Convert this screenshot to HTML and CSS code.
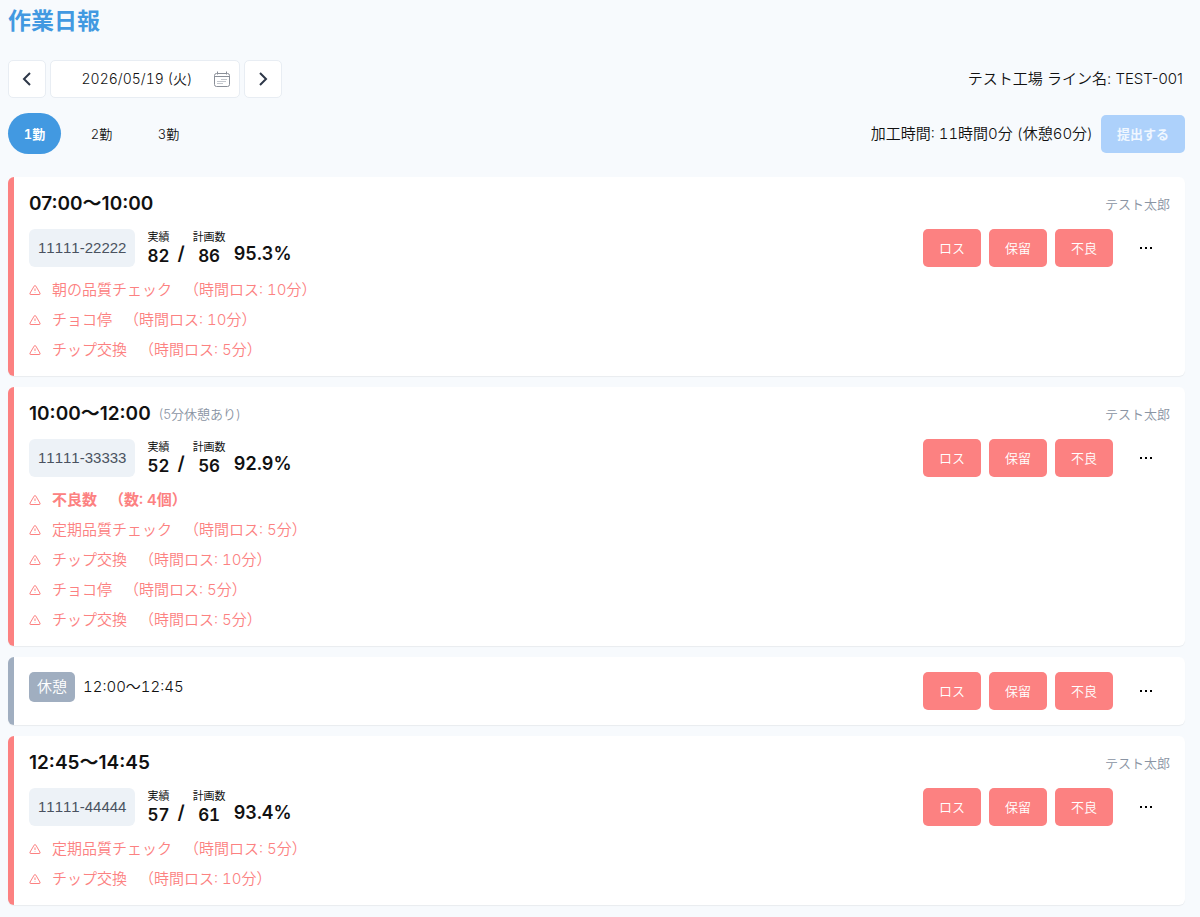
FILE: index.html
```html
<!DOCTYPE html>
<html lang="ja">
<head>
    <meta charset="UTF-8">
    <meta name="viewport" content="width=device-width, initial-scale=1.0">
    <title>作業日報</title>
    <link rel="stylesheet" href="styles.css">
</head>
<body>
    <!-- 共通アイコン -->
    <svg class="sprite" aria-hidden="true">
        <symbol id="warn" viewBox="0 0 24 24">
            <path d="M10.3 4.2 2.2 18a2 2 0 0 0 1.7 3h16.2a2 2 0 0 0 1.7-3L13.7 4.2a2 2 0 0 0-3.4 0z"/>
            <path d="M12 9v5M12 17v1"/>
        </symbol>
    </svg>

    <header>
        <h1>作業日報</h1>
        <div class="bar">
            <div class="date-nav">
                <button type="button" class="nav-btn" aria-label="前の日">
                    <svg width="16" height="16" viewBox="0 0 16 16"><path d="M11 2 5 8l6 6"/></svg>
                </button>
                <div class="date-box">
                    <input type="text" id="date" aria-label="日付" value="2026/05/19 (火)">
                    <svg width="16" height="16" viewBox="0 0 16 16">
                        <rect x="0.5" y="2.5" width="15" height="13" rx="2"/>
                        <path d="M3.5 0.5v3M12.5 0.5v3M0.5 5.5h15"/>
                        <path class="lines" d="M7 8.5h6M3 10.5h9M3 12.5h6"/>
                    </svg>
                </div>
                <button type="button" class="nav-btn" aria-label="次の日">
                    <svg width="16" height="16" viewBox="0 0 16 16"><path d="M5 2l6 6-6 6"/></svg>
                </button>
            </div>
            <p class="line-name">テスト工場 ライン名: TEST-001</p>
        </div>
        <div class="bar">
            <div class="shifts">
                <button type="button" class="shift active">1勤</button>
                <button type="button" class="shift">2勤</button>
                <button type="button" class="shift">3勤</button>
            </div>
            <div class="submit">
                <p>加工時間: 11時間0分 (休憩60分)</p>
                <button type="button" class="btn-submit" disabled>提出する</button>
            </div>
        </div>
    </header>

    <main>
        <section class="card">
            <div class="card-head">
                <h2>07:00〜10:00</h2>
                <span class="worker">テスト太郎</span>
            </div>
            <div class="card-row">
                <span class="code">11111-22222</span>
                <div class="result">
                    <div class="count"><span>実績</span><b>82</b></div>
                    <b class="slash">/</b>
                    <div class="count"><span>計画数</span><b>86</b></div>
                    <b class="rate">95.3%</b>
                </div>
                <div class="actions">
                    <button type="button" class="btn">ロス</button>
                    <button type="button" class="btn">保留</button>
                    <button type="button" class="btn">不良</button>
                    <button type="button" class="more" aria-label="メニュー"><i></i><i></i><i></i></button>
                </div>
            </div>
            <ul class="losses">
                <li><svg><use href="#warn"/></svg><span>朝の品質チェック</span><span>（時間ロス: 10分）</span></li>
                <li><svg><use href="#warn"/></svg><span>チョコ停</span><span>（時間ロス: 10分）</span></li>
                <li><svg><use href="#warn"/></svg><span>チップ交換</span><span>（時間ロス: 5分）</span></li>
            </ul>
        </section>

        <section class="card">
            <div class="card-head">
                <h2>10:00〜12:00</h2>
                <span class="note">(5分休憩あり)</span>
                <span class="worker">テスト太郎</span>
            </div>
            <div class="card-row">
                <span class="code">11111-33333</span>
                <div class="result">
                    <div class="count"><span>実績</span><b>52</b></div>
                    <b class="slash">/</b>
                    <div class="count"><span>計画数</span><b>56</b></div>
                    <b class="rate">92.9%</b>
                </div>
                <div class="actions">
                    <button type="button" class="btn">ロス</button>
                    <button type="button" class="btn">保留</button>
                    <button type="button" class="btn">不良</button>
                    <button type="button" class="more" aria-label="メニュー"><i></i><i></i><i></i></button>
                </div>
            </div>
            <ul class="losses">
                <li class="defect"><svg><use href="#warn"/></svg><span>不良数</span><span>（数: 4個）</span></li>
                <li><svg><use href="#warn"/></svg><span>定期品質チェック</span><span>（時間ロス: 5分）</span></li>
                <li><svg><use href="#warn"/></svg><span>チップ交換</span><span>（時間ロス: 10分）</span></li>
                <li><svg><use href="#warn"/></svg><span>チョコ停</span><span>（時間ロス: 5分）</span></li>
                <li><svg><use href="#warn"/></svg><span>チップ交換</span><span>（時間ロス: 5分）</span></li>
            </ul>
        </section>

        <section class="card rest">
            <div class="card-row">
                <span class="badge">休憩</span>
                <span class="rest-time">12:00〜12:45</span>
                <div class="actions">
                    <button type="button" class="btn">ロス</button>
                    <button type="button" class="btn">保留</button>
                    <button type="button" class="btn">不良</button>
                    <button type="button" class="more" aria-label="メニュー"><i></i><i></i><i></i></button>
                </div>
            </div>
        </section>

        <section class="card">
            <div class="card-head">
                <h2>12:45〜14:45</h2>
                <span class="worker">テスト太郎</span>
            </div>
            <div class="card-row">
                <span class="code">11111-44444</span>
                <div class="result">
                    <div class="count"><span>実績</span><b>57</b></div>
                    <b class="slash">/</b>
                    <div class="count"><span>計画数</span><b>61</b></div>
                    <b class="rate">93.4%</b>
                </div>
                <div class="actions">
                    <button type="button" class="btn">ロス</button>
                    <button type="button" class="btn">保留</button>
                    <button type="button" class="btn">不良</button>
                    <button type="button" class="more" aria-label="メニュー"><i></i><i></i><i></i></button>
                </div>
            </div>
            <ul class="losses">
                <li><svg><use href="#warn"/></svg><span>定期品質チェック</span><span>（時間ロス: 5分）</span></li>
                <li><svg><use href="#warn"/></svg><span>チップ交換</span><span>（時間ロス: 10分）</span></li>
            </ul>
        </section>
    </main>
</body>
</html>
```
FILE: styles.css
```css
* {
    box-sizing: border-box;
    margin: 0;
    padding: 0;
}

body {
    padding: 6px 15px 11px 8px;
    background: #f7fafd;
    color: #111;
    font-family: Inter, "Noto Sans CJK JP", sans-serif;
    font-size: 15px;
    font-weight: 350;
    line-height: 24px;
}

button,
input {
    font: inherit;
    color: inherit;
    border: 0;
    background: none;
}

button {
    cursor: pointer;
}

svg {
    fill: none;
    stroke: currentColor;
    flex: none;
}

.sprite {
    display: none;
}

/* ヘッダー */
h1 {
    color: #4299e1;
    font-size: 23px;
    line-height: 30px;
    font-weight: 600;
    margin-bottom: 24px;
}

.bar {
    display: flex;
    justify-content: space-between;
    align-items: center;
    margin-bottom: 15px;
}

.date-nav {
    display: flex;
    gap: 4px;
}

.nav-btn,
.date-box {
    display: flex;
    align-items: center;
    justify-content: center;
    height: 38px;
    background: #fff;
    border: 1px solid #e8edf3;
    border-radius: 5px;
}

.nav-btn {
    width: 38px;
}

.nav-btn svg {
    stroke-width: 2;
    color: #2d3748;
}

.date-box {
    width: 190px;
    padding: 0 9px;
}

.date-box input {
    flex: 1;
    min-width: 0;
    font-size: 14px;
    font-variant-numeric: tabular-nums;
    text-align: center;
}

.date-box svg {
    color: #8a8f98;
}

.date-box .lines {
    stroke: #c3c7cd;
}

.line-name {
    padding-right: 2px;
}

.submit p {
    font-variant-numeric: tabular-nums;
}

.shifts {
    display: flex;
    gap: 14px;
}

.shift {
    width: 53px;
    height: 41px;
    border-radius: 21px;
    font-size: 13px;
    font-variant-numeric: tabular-nums;
}

.shift.active {
    background: #4299e1;
    color: #fff;
    font-weight: 600;
}

.submit {
    display: flex;
    align-items: center;
    gap: 8px;
}

.btn-submit {
    height: 38px;
    padding: 0 16px;
    border-radius: 5px;
    background: #add1fb;
    color: #f0f7ff;
    font-size: 13px;
    font-weight: 600;
}

/* 時間帯カード */
main {
    display: flex;
    flex-direction: column;
    gap: 11px;
    margin-top: 23px;
}

.card {
    padding: 15px 15px 11px;
    background: #fff;
    border-left: 6px solid #fc8181;
    border-radius: 6px;
    box-shadow: 0 1px 1px rgba(0, 0, 0, 0.06);
}

.card.rest {
    border-left-color: #a0aec0;
    padding-bottom: 15px;
}

.card-head {
    display: flex;
    align-items: center;
    gap: 8px;
    height: 24px;
    margin-bottom: 13px;
}

h2 {
    font-size: 19px;
    line-height: 26px;
    font-weight: 600;
}

.note,
.worker {
    color: #8a94a3;
    font-size: 13px;
}

.worker {
    margin-left: auto;
}

.card-row {
    display: flex;
}

.code {
    height: 38px;
    padding: 0 9px;
    border-radius: 6px;
    background: #edf2f7;
    color: #4a5260;
    font-family: "Liberation Sans", sans-serif;
    font-kerning: none;
    line-height: 38px;
}

.result {
    display: flex;
    align-items: center;
    gap: 8px;
    margin-left: 12px;
}

.count {
    display: flex;
    flex-direction: column;
    align-items: center;
}

.count span {
    font-size: 11px;
    line-height: 16px;
    font-weight: 400;
}

.result b {
    font-size: 17px;
    line-height: 22px;
    font-weight: 600;
    font-variant-numeric: tabular-nums;
}

.result .slash,
.result .rate {
    padding-top: 12px;
    font-size: 19px;
}

.result .rate {
    font-size: 18px;
}

.actions {
    display: flex;
    gap: 8px;
    margin-left: auto;
}

.btn {
    width: 58px;
    height: 38px;
    border-radius: 5px;
    background: #fc8181;
    color: #fff;
    font-size: 13px;
}

.more {
    display: flex;
    align-items: center;
    justify-content: center;
    gap: 3px;
    width: 49px;
    height: 38px;
}

.more i {
    width: 2px;
    height: 2px;
    background: #000;
}

/* ロス一覧 */
.losses {
    list-style: none;
    margin-top: 8px;
    color: #fc8181;
    font-variant-numeric: tabular-nums;
}

.losses li {
    display: flex;
    align-items: center;
    height: 30px;
}

.losses svg {
    width: 12px;
    height: 12px;
    margin-right: 11px;
    stroke-width: 2;
}

.losses span + span {
    margin-left: 12px;
}

.losses .defect {
    font-weight: 600;
}

/* 休憩 */
.badge {
    height: 30px;
    padding: 0 8px;
    border-radius: 5px;
    background: #a0aec0;
    color: #fff;
    line-height: 30px;
}

.rest-time {
    margin-left: 8px;
    line-height: 30px;
    font-variant-numeric: tabular-nums;
}
```
